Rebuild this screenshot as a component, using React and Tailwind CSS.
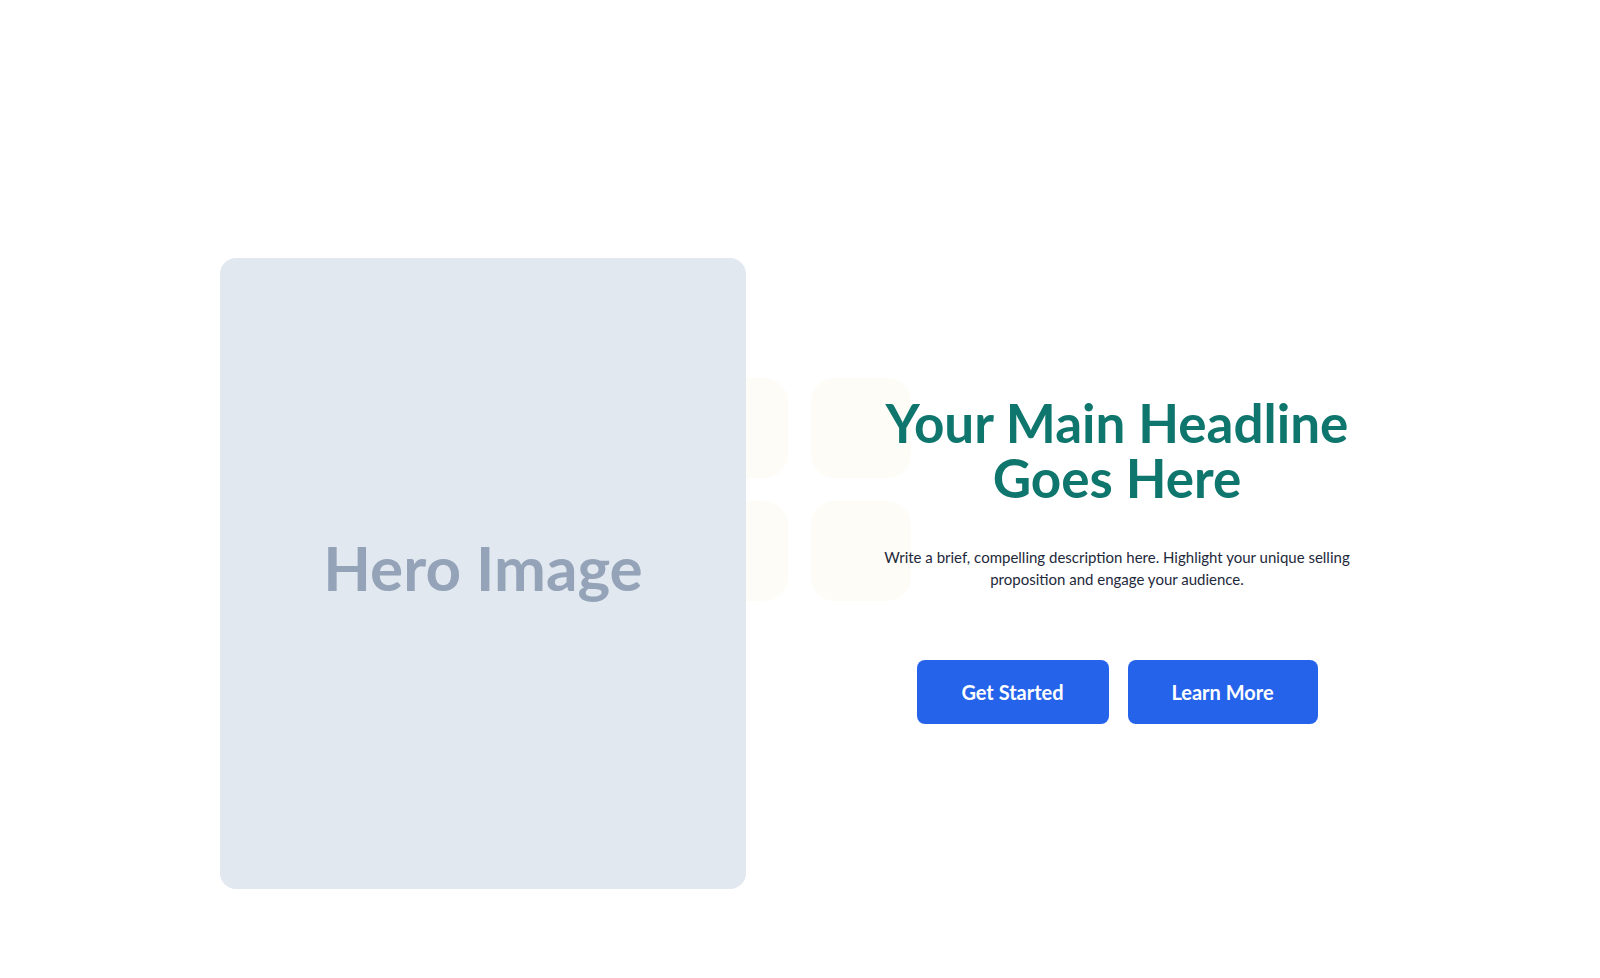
export default function App() {
    return (
        <div className="min-h-screen bg-white font-['Lato',sans-serif]">
            {/* Hero */}
            <section className="pt-[258px] pb-[89px]">
                <div className="relative mx-auto w-[1160px] grid grid-cols-2 gap-[108px] items-center">
                    {/* Decorative tiles behind content */}
                    <div className="absolute left-[468px] top-[120px] grid grid-cols-2 gap-[23px]">
                        <div className="w-[100px] h-[100px] rounded-3xl bg-[#fdfcf6]"></div>
                        <div className="w-[100px] h-[100px] rounded-3xl bg-[#fdfcf6]"></div>
                        <div className="w-[100px] h-[100px] rounded-3xl bg-[#fdfcf6]"></div>
                        <div className="w-[100px] h-[100px] rounded-3xl bg-[#fdfcf6]"></div>
                    </div>

                    <div className="relative z-10 h-[631px] rounded-2xl bg-[#e2e8f0] flex items-center justify-center">
                        <span className="mb-[14px] text-[62px] leading-none font-bold text-[#94a3b8]">Hero Image</span>
                    </div>

                    <div className="relative z-10 flex flex-col items-center text-center -mt-[28px]">
                        <h1 className="text-[53px] leading-[55px] font-bold text-[#0f766e]">
                            Your Main Headline<br />Goes Here
                        </h1>
                        <p className="mt-[41px] max-w-[480px] text-[15px] leading-[22px] text-[#1e293b]">
                            Write a brief, compelling description here. Highlight your unique selling proposition and engage your audience.
                        </p>
                        <div className="mt-[70px] flex gap-[19px]">
                            <button className="h-16 w-[192px] rounded-lg bg-[#2563eb] text-[20px] font-bold text-white">
                                Get Started
                            </button>
                            <button className="h-16 w-[190px] rounded-lg bg-[#2563eb] text-[20px] font-bold text-white">
                                Learn More
                            </button>
                        </div>
                    </div>
                </div>
            </section>
        </div>
    );
}
